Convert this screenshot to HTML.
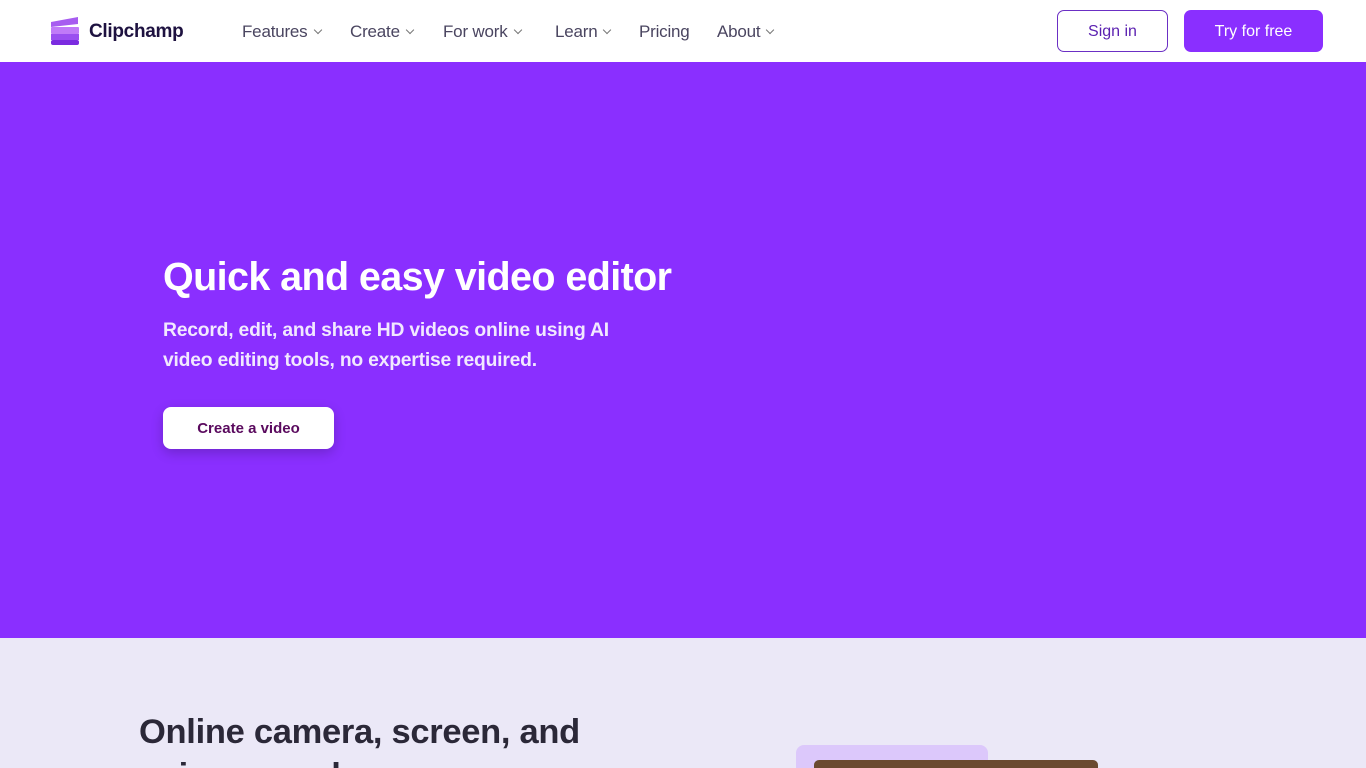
<!DOCTYPE html>
<html><head><meta charset="utf-8"><style>
*{margin:0;padding:0;box-sizing:border-box}
html,body{width:1366px;height:768px;overflow:hidden}
body{font-family:"Liberation Sans",sans-serif;background:#ebe8f7;position:relative}
.nav{height:62px;background:#fff;position:relative}
.logo{position:absolute;left:50px;top:16px}
.brand{position:absolute;left:89px;top:21px;font-size:19px;font-weight:bold;color:#1e1240;letter-spacing:-0.3px}
.menu{position:absolute;top:22px;font-size:17px;color:#4a4560;letter-spacing:-0.2px}
.chev{display:inline-block;width:6px;height:6px;border-right:1.3px solid #777;border-bottom:1.3px solid #777;transform:rotate(45deg);margin-left:7px;position:relative;top:-4px}
.signin{position:absolute;left:1057px;top:10px;width:111px;height:42px;border:1px solid #6b2fc4;border-radius:7px;color:#5a1fb0;font-size:16px;text-align:center;line-height:42px}
.try{position:absolute;left:1184px;top:10px;width:139px;height:42px;background:#8a2fff;border-radius:7px;color:#fff;font-size:16px;text-align:center;line-height:44px}
.hero{position:absolute;top:62px;left:0;width:1366px;height:576px;background:#8a2fff}
h1{position:absolute;left:163px;top:255px;font-size:39.5px;color:#fff;font-weight:bold;letter-spacing:-0.6px;white-space:nowrap}
.sub{position:absolute;left:163px;top:316px;font-size:19.3px;line-height:30px;color:#f1e8ff;font-weight:bold;width:500px;letter-spacing:-0.2px}
.cta{position:absolute;left:163px;top:407px;width:171px;height:42px;background:#fff;border-radius:8px;color:#5a0a5e;font-weight:bold;font-size:15px;text-align:center;line-height:44px;box-shadow:0 4px 12px rgba(0,0,0,.2)}
h2{position:absolute;left:139px;top:710px;font-size:34.5px;color:#2b2838;font-weight:bold;line-height:44px;letter-spacing:-0.3px}
</style></head><body>
<div class="nav">
<svg class="logo" width="30" height="30" viewBox="0 0 30 30"><path d="M1 6 L28 1 L28 8 L1 11Z" fill="#a75cf0"/><rect x="1" y="11" width="28" height="7" rx="1" fill="#c07af8"/><rect x="1" y="18" width="28" height="6" fill="#9a4ef0"/><rect x="1" y="24" width="28" height="5" rx="2" fill="#7b2be0"/></svg>
<div class="brand">Clipchamp</div>
<div class="menu" style="left:242px">Features<span class="chev"></span></div>
<div class="menu" style="left:350px">Create<span class="chev"></span></div>
<div class="menu" style="left:443px">For work<span class="chev"></span></div>
<div class="menu" style="left:555px">Learn<span class="chev"></span></div>
<div class="menu" style="left:639px">Pricing</div>
<div class="menu" style="left:717px">About<span class="chev"></span></div>
<div class="signin">Sign in</div>
<div class="try">Try for free</div>
</div>
<div class="hero"></div>
<h1>Quick and easy video editor</h1>
<div class="sub">Record, edit, and share HD videos online using AI video editing tools, no expertise required.</div>
<div class="cta">Create a video</div>
<h2>Online camera, screen, and<br>voice recorder</h2>
<div style="position:absolute;left:796px;top:745px;width:192px;height:40px;background:#dcc8fb;border-radius:8px"></div>
<div style="position:absolute;left:814px;top:760px;width:284px;height:30px;background:#6b4a30;border-radius:5px"></div>
</body></html>
